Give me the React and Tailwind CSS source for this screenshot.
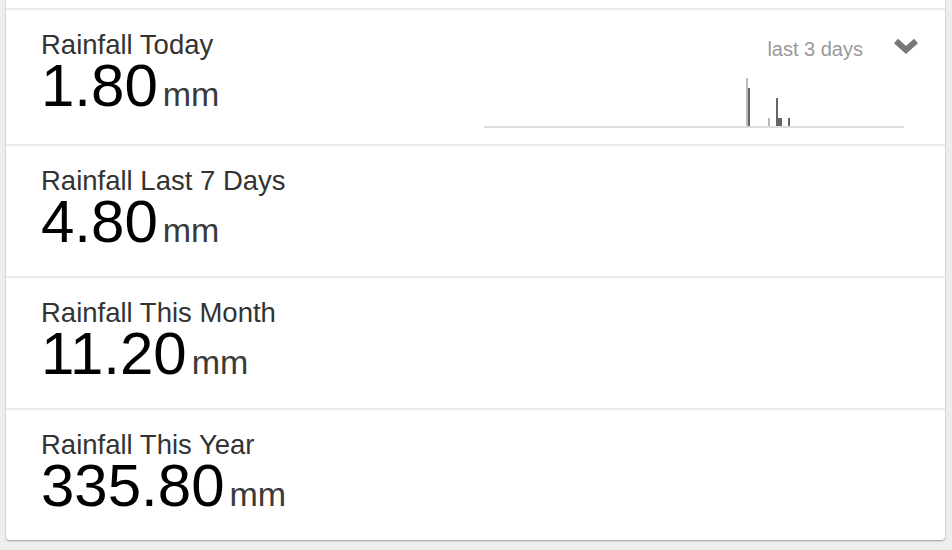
const rows = [
  { label: "Rainfall Today", value: "1.80", chart: true },
  { label: "Rainfall Last 7 Days", value: "4.80" },
  { label: "Rainfall This Month", value: "11.20" },
  { label: "Rainfall This Year", value: "335.80" },
];

const Chevron = () => (
  <svg width="26" height="18" viewBox="0 0 26 18" className="ml-[30px]">
    <path d="M3 4 L13 13 L23 4" fill="none" stroke="#777" strokeWidth="6" strokeLinejoin="miter" />
  </svg>
);

const MiniChart = () => (
  <svg width="420" height="52" className="mt-[15px] block">
    <rect x="0" y="50" width="420" height="2" fill="#dddddd" />
    <rect x="262" y="2" width="2" height="48" fill="#bbbbbb" />
    <rect x="264" y="12" width="2" height="38" fill="#666666" />
    <rect x="284" y="42" width="2" height="8" fill="#bbbbbb" />
    <rect x="292" y="22" width="2" height="28" fill="#666666" />
    <rect x="294" y="42" width="4" height="8" fill="#666666" />
    <rect x="304" y="42" width="2" height="8" fill="#666666" />
  </svg>
);

const Row = ({ label, value, chart, last, first }) => (
  <div
    className={`flex items-start justify-between pl-[35px] pr-[26px] pt-[21px] ${
      first ? "h-[136px]" : last ? "h-[130px]" : "h-[132px]"
    } ${last ? "" : "border-b-2 border-[#ebebeb]"}`}
  >
    <div>
      <div className="text-[27.5px] leading-[27px] text-[#333333]">{label}</div>
      <div className="flex items-baseline">
        <span className="text-[60px] leading-[56px] text-black">{value}</span>
        <span className="ml-[5px] text-[34px] text-[#3a3a3a]">mm</span>
      </div>
    </div>
    {chart && (
      <div className="mt-[6px] w-[435px]">
        <div className="flex items-start justify-end">
          <span className="text-[20px] leading-[24px] text-[#999999]">last 3 days</span>
          <Chevron />
        </div>
        <MiniChart />
      </div>
    )}
  </div>
);

export default function App() {
  return (
    <div
      className="h-[550px] w-[952px] overflow-hidden bg-[#eeeeee]"
      style={{ fontFamily: '"Liberation Sans", Arial, sans-serif' }}
    >
      <div className="ml-[6px] w-[939px] rounded-b-[4px] bg-white shadow-[0_1px_2px_rgba(0,0,0,0.35)]">
        <div className="h-[10px] border-b-2 border-[#ebebeb]" />
        {rows.map((r, i) => (
          <Row key={r.label} {...r} first={i === 0} last={i === rows.length - 1} />
        ))}
      </div>
    </div>
  );
}
